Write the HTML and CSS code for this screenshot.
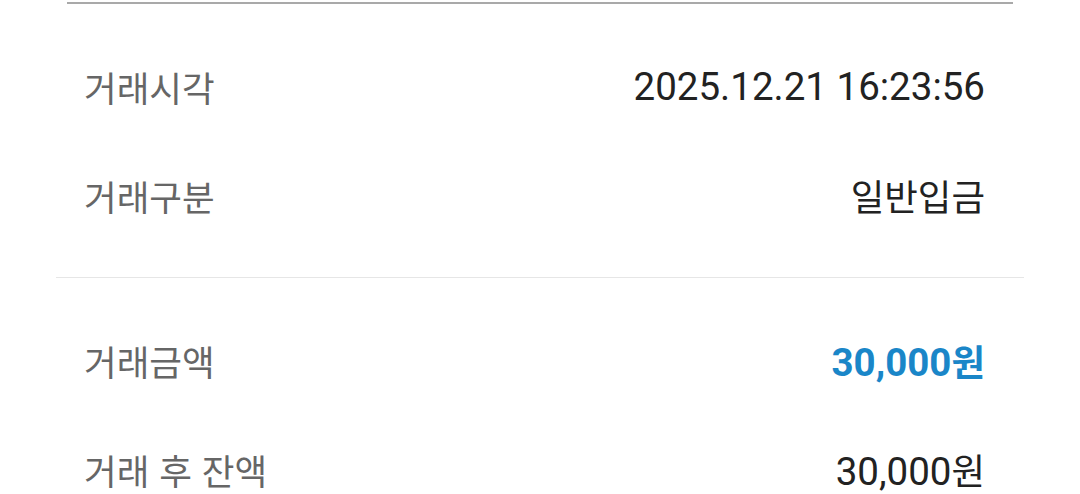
FILE: index.html
```html
<!DOCTYPE html>
<html lang="ko">
<head>
<meta charset="utf-8">
<link rel="stylesheet" href="styles.css">
</head>
<body>
<div class="page">
  <div class="top-rule"></div>
  <section class="group group-first">
    <div class="row"><span class="label">거래시각</span><span class="value">2025.12.21 16:23:56</span></div>
    <div class="row"><span class="label">거래구분</span><span class="value"><span class="ko">일반입금</span></span></div>
  </section>
  <div class="divider"></div>
  <section class="group group-second">
    <div class="row"><span class="label">거래금액</span><span class="value amount">30,000<span class="ko">원</span></span></div>
    <div class="row"><span class="label">거래 후 잔액</span><span class="value">30,000<span class="ko">원</span></span></div>
  </section>
</div>
</body>
</html>
```

FILE: styles.css
```css
html, body {
  margin: 0;
  padding: 0;
  background: #ffffff;
}
body {
  width: 1080px;
  height: 494px;
  overflow: hidden;
  font-family: Roboto, "Noto Sans CJK KR", sans-serif;
}
.page {
  display: flex;
  flex-direction: column;
}
.top-rule {
  height: 2px;
  margin: 2px 67px 0 67px;
  background: #a9a9a9;
}
.group {
  display: flex;
  flex-direction: column;
  padding: 0 95px 0 84px;
}
.group-first {
  padding-top: 28px;
  padding-bottom: 27px;
}
.group-second {
  padding-top: 28px;
}
.row {
  height: 109px;
  display: flex;
  align-items: center;
  justify-content: space-between;
}
.label {
  font-family: "Noto Sans CJK KR", sans-serif;
  font-size: 35.5px;
  color: #666666;
}
.value {
  font-size: 38.5px;
  color: #222222;
}
.ko {
  font-size: 36.5px;
}
.value.amount {
  color: #1a86c8;
  font-weight: 700;
}
.divider {
  height: 1px;
  margin: 0 56px;
  background: #e6e6e6;
}
```
